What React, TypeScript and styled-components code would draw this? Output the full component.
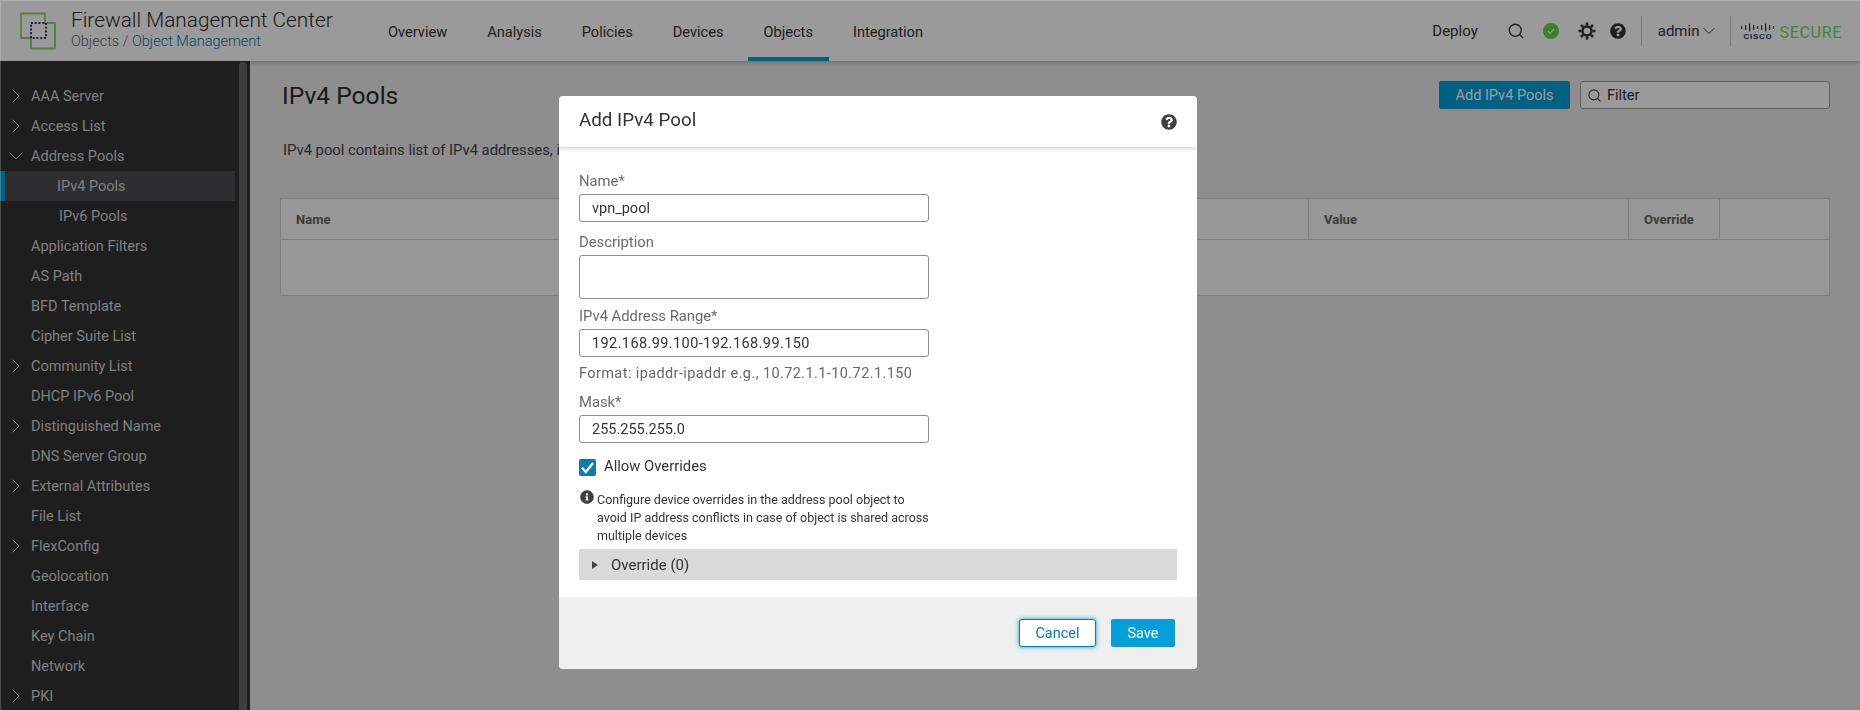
import styled, { createGlobalStyle } from "styled-components";
import { ChevronDown, ChevronRight, Search } from "lucide-react";
import { FaInfoCircle, FaQuestionCircle } from "react-icons/fa";

const GlobalStyle = createGlobalStyle`
  html, body {
    margin: 0;
    height: 100%;
    overflow: hidden;
  }
  body {
    font-family: Roboto, "Liberation Sans", sans-serif;
    color: #333;
    background: #ebebeb;
  }
  * {
    box-sizing: border-box;
  }
`;

const NAV_ITEMS = ["Overview", "Analysis", "Policies", "Devices", "Objects", "Integration"];

const SIDE_ITEMS: { label: string; arrow?: "right" | "down"; child?: boolean; active?: boolean }[] = [
  { label: "AAA Server", arrow: "right" },
  { label: "Access List", arrow: "right" },
  { label: "Address Pools", arrow: "down" },
  { label: "IPv4 Pools", child: true, active: true },
  { label: "IPv6 Pools", child: true },
  { label: "Application Filters" },
  { label: "AS Path" },
  { label: "BFD Template" },
  { label: "Cipher Suite List" },
  { label: "Community List", arrow: "right" },
  { label: "DHCP IPv6 Pool" },
  { label: "Distinguished Name", arrow: "right" },
  { label: "DNS Server Group" },
  { label: "External Attributes", arrow: "right" },
  { label: "File List" },
  { label: "FlexConfig", arrow: "right" },
  { label: "Geolocation" },
  { label: "Interface" },
  { label: "Key Chain" },
  { label: "Network" },
  { label: "PKI", arrow: "right" },
];

function ProductLogo() {
  return (
    <svg width="38" height="38" viewBox="0 0 38 38" fill="none">
      <path
        d="M2 2.500a1 1 0 0 1 1-1h23V11h10v25.500H12V26H2z"
        stroke="#8ed470"
        strokeWidth="1.800"
        strokeLinejoin="round"
      />
      <path d="M12 11h15v15H12z" stroke="#1d3a6a" strokeWidth="2" strokeDasharray="2 1.750" />
    </svg>
  );
}

function Gear() {
  return (
    <svg width="18" height="18" viewBox="0 0 18 18" fill="none" stroke="#333">
      <circle cx="9" cy="9" r="4.500" strokeWidth="2.400" />
      <g strokeWidth="2.600">
        <path d="M9 .500v3M9 14.500v3M.500 9h3M14.500 9h3M3 3l2.100 2.100M12.900 12.900 15 15M15 3l-2.100 2.100M5.100 12.900 3 15" />
      </g>
    </svg>
  );
}

function CiscoBars() {
  const bars = [3, 5, 8, 5, 3, 5, 8, 5, 3];
  return (
    <svg width="33" height="9" viewBox="0 0 33 9">
      {bars.map((h, i) => (
        <rect key={i} x={i * 4} y={(9 - h) / 2} width="1.200" height={h} fill="#1c3358" rx="0.600" />
      ))}
    </svg>
  );
}

export default function App() {
  return (
    <>
      <GlobalStyle />
      <Page>
        <TopBar>
          <Brand>
            <ProductLogo />
            <BrandText>
              <ProductName>Firewall Management Center</ProductName>
              <Crumbs>
                Objects / <CrumbLink>Object Management</CrumbLink>
              </Crumbs>
            </BrandText>
          </Brand>
          <Nav>
            {NAV_ITEMS.map((item) => (
              <NavItem key={item} $active={item === "Objects"}>
                {item}
              </NavItem>
            ))}
          </Nav>
          <Tools>
            <Deploy>Deploy</Deploy>
            <ToolIcons>
              <Search size={18} strokeWidth={1.7} color="#333" />
              <StatusDot>
                <svg width="8" height="8" viewBox="0 0 8 8" fill="none" stroke="#fff" strokeWidth="1.300">
                  <path d="M1 4.200 3.200 6.300 7 1.800" />
                </svg>
              </StatusDot>
              <GearSlot>
                <Gear />
              </GearSlot>
              <FaQuestionCircle size={16} color="#333" />
            </ToolIcons>
            <Divider />
            <AdminMenu>
              admin
              <ChevronDown size={20} strokeWidth={1.2} />
            </AdminMenu>
            <Divider />
            <CiscoMark>
              <CiscoLogo>
                <CiscoBars />
                <CiscoWord>cisco</CiscoWord>
              </CiscoLogo>
              <Secure>SECURE</Secure>
            </CiscoMark>
          </Tools>
        </TopBar>
        <Main>
          <Sidebar>
            <SideList>
              {SIDE_ITEMS.map((item) => (
                <SideRow key={item.label} $active={item.active} $child={item.child}>
                  <SideArrow>
                    {item.arrow === "right" && <ChevronRight size={24} strokeWidth={1} />}
                    {item.arrow === "down" && <ChevronDown size={24} strokeWidth={1} />}
                  </SideArrow>
                  {item.label}
                </SideRow>
              ))}
            </SideList>
            <ScrollThumb />
          </Sidebar>
          <Content>
            <ContentHead>
              <PageTitle>IPv4 Pools</PageTitle>
              <HeadActions>
                <AddButton>Add IPv4 Pools</AddButton>
                <FilterBox>
                  <Search size={15} strokeWidth={1.7} color="#444" />
                  Filter
                </FilterBox>
              </HeadActions>
            </ContentHead>
            <Intro>IPv4 pool contains list of IPv4 addresses, it is used for diagnostic interface with clustering, or for VPN</Intro>
            <Table>
              <TableHead>
                <HeadCell>Name</HeadCell>
                <HeadCell>Value</HeadCell>
                <HeadCell>Override</HeadCell>
                <HeadCell />
              </TableHead>
              <TableBody />
            </Table>
          </Content>
        </Main>
      </Page>
      <Backdrop>
        <Modal>
          <ModalHeader>
            <ModalTitle>Add IPv4 Pool</ModalTitle>
            <FaQuestionCircle size={16} color="#3f3f3f" />
          </ModalHeader>
          <ModalBody>
            <Field $after={10}>
              <FieldLabel>Name*</FieldLabel>
              <TextBox>vpn_pool</TextBox>
            </Field>
            <Field $after={7}>
              <FieldLabel>Description</FieldLabel>
              <TextBox $tall />
            </Field>
            <Field $after={8}>
              <FieldLabel>IPv4 Address Range*</FieldLabel>
              <TextBox $spread>192.168.99.100-192.168.99.150</TextBox>
              <FieldHint>Format: ipaddr-ipaddr e.g., 10.72.1.1-10.72.1.150</FieldHint>
            </Field>
            <Field $after={16}>
              <FieldLabel>Mask*</FieldLabel>
              <TextBox>255.255.255.0</TextBox>
            </Field>
            <CheckRow>
              <CheckBox>
                <svg width="15" height="15" viewBox="0 0 15 15" fill="none" stroke="#fff" strokeWidth="2.300">
                  <path d="M2 7.800 5.800 12 13 3" />
                </svg>
              </CheckBox>
              <CheckText>Allow Overrides</CheckText>
            </CheckRow>
            <InfoNote>
              <InfoIcon>
                <FaInfoCircle size={14} color="#3f3f3f" />
              </InfoIcon>
              <InfoText>
                Configure device overrides in the address pool object to avoid IP address conflicts in case of object is
                shared across multiple devices
              </InfoText>
            </InfoNote>
            <OverrideBar>
              <OverrideCaret />
              Override (0)
            </OverrideBar>
          </ModalBody>
          <ModalFooter>
            <CancelButton>Cancel</CancelButton>
            <SaveButton>Save</SaveButton>
          </ModalFooter>
        </Modal>
      </Backdrop>
    </>
  );
}

const Page = styled.div`
  width: 1860px;
  height: 710px;
  display: flex;
  flex-direction: column;
  overflow: hidden;
`;

const TopBar = styled.header`
  height: 61px;
  flex: none;
  display: flex;
  align-items: center;
  padding: 0 18px 0 19px;
  background: #fff;
  box-shadow: 0 1px 4px rgba(0, 0, 0, 0.3);
  position: relative;
`;

const Brand = styled.div`
  width: 353px;
  display: flex;
  align-items: center;
  gap: 14px;
`;

const BrandText = styled.div`
  display: flex;
  flex-direction: column;
  padding-bottom: 4px;
`;

const ProductName = styled.div`
  font-size: 20.800px;
  line-height: 26px;
  font-weight: 300;
  color: #2b2b2b;
`;

const Crumbs = styled.div`
  font-size: 14.500px;
  line-height: 18px;
  font-weight: 300;
  color: #666;
`;

const CrumbLink = styled.span`
  color: #0a76a8;
`;

const Nav = styled.nav`
  display: flex;
  height: 100%;
  gap: 8px;
`;

const NavItem = styled.div<{ $active?: boolean }>`
  height: 100%;
  display: flex;
  align-items: center;
  padding: 2px 16px 0;
  font-size: 14.600px;
  color: #333;
  border-bottom: 4px solid ${(p) => (p.$active ? "#049fd9" : "transparent")};
  border-top: 4px solid transparent;
`;

const Tools = styled.div`
  margin-left: auto;
  display: flex;
  align-items: center;
`;

const Deploy = styled.div`
  font-size: 15px;
  color: #333;
  margin-right: 29px;
`;

const ToolIcons = styled.div`
  display: flex;
  align-items: center;
  gap: 18px;
  margin-right: 15px;
`;

const StatusDot = styled.span`
  width: 16px;
  height: 16px;
  border-radius: 50%;
  background: #68d048;
  display: flex;
  align-items: center;
  justify-content: center;
`;

const GearSlot = styled.span`
  display: flex;
  margin: 0 -4px 0 1px;
`;

const Divider = styled.span`
  width: 1px;
  height: 30px;
  background: #c9c9c9;
`;

const AdminMenu = styled.div`
  display: flex;
  align-items: center;
  gap: 0;
  font-size: 15px;
  color: #333;
  padding: 0 11px 0 16px;
`;

const CiscoMark = styled.div`
  display: flex;
  align-items: center;
  gap: 5px;
  padding-left: 10px;
`;

const CiscoLogo = styled.div`
  display: flex;
  flex-direction: column;
  align-items: center;
  gap: 1px;
  padding-top: 2px;
`;

const CiscoWord = styled.span`
  font-family: "Liberation Sans", sans-serif;
  font-size: 8px;
  line-height: 8px;
  font-weight: 700;
  letter-spacing: 0.700px;
  text-transform: uppercase;
  color: #1c3358;
`;

const Secure = styled.span`
  font-size: 16px;
  letter-spacing: 0.700px;
  color: #7ad65a;
  padding-top: 4px;
`;

const Main = styled.div`
  flex: 1;
  min-height: 0;
  display: flex;
`;

const Sidebar = styled.aside`
  width: 250px;
  flex: none;
  background: #323232;
  display: flex;
  position: relative;
  overflow: hidden;
`;

const SideList = styled.div`
  flex: 1;
  padding-top: 20px;
`;

const SideRow = styled.div<{ $active?: boolean; $child?: boolean }>`
  width: 235px;
  height: 30px;
  display: flex;
  align-items: center;
  font-size: 14.500px;
  color: #d3d3d3;
  padding-left: ${(p) => (p.$active ? "25px" : p.$child ? "32px" : "4px")};
  background: ${(p) => (p.$active ? "#4c4c50" : "transparent")};
  border-left: ${(p) => (p.$active ? "5px solid #049fd9" : "none")};
`;

const SideArrow = styled.span`
  width: 27px;
  flex: none;
  display: flex;
  color: #d3d3d3;
`;

const ScrollThumb = styled.div`
  position: absolute;
  top: 1px;
  right: 3px;
  bottom: 0;
  width: 8px;
  border-radius: 4px 4px 0 0;
  background: #686868;
`;

const Content = styled.main`
  flex: 1;
  padding: 20px 30px 0 30px;
`;

const ContentHead = styled.div`
  display: flex;
  justify-content: space-between;
  align-items: center;
  height: 28px;
`;

const PageTitle = styled.h1`
  margin: 0 0 0 2px;
  font-size: 24.600px;
  font-weight: 400;
  color: #2b2b2b;
`;

const HeadActions = styled.div`
  display: flex;
  gap: 10px;
`;

const AddButton = styled.div`
  width: 131px;
  height: 28px;
  display: flex;
  align-items: center;
  justify-content: center;
  border-radius: 2px;
  background: #049fd9;
  color: #fff;
  font-size: 14.500px;
`;

const FilterBox = styled.div`
  width: 250px;
  height: 28px;
  display: flex;
  align-items: center;
  gap: 5px;
  padding: 0 6px;
  border: 1px solid #9d9d9d;
  border-radius: 3px;
  background: #fff;
  font-size: 14.500px;
  color: #333;
`;

const Intro = styled.p`
  margin: 31px 0 0 3px;
  font-size: 14.800px;
  line-height: 20px;
  color: #444;
  white-space: nowrap;
`;

const Table = styled.div`
  margin-top: 38px;
  width: 1550px;
  border: 1px solid #d0d0d0;
  background: #fbfbfb;
`;

const TableHead = styled.div`
  height: 41px;
  display: grid;
  grid-template-columns: 1027px 320px 91px 1fr;
  border-bottom: 1px solid #d0d0d0;
`;

const HeadCell = styled.div`
  display: flex;
  align-items: center;
  padding-left: 15px;
  font-size: 13px;
  font-weight: 700;
  color: #666;
  border-left: 1px solid #d0d0d0;
  &:first-child {
    border-left: 0;
  }
`;

const TableBody = styled.div`
  height: 55px;
`;

const Backdrop = styled.div`
  position: fixed;
  inset: 0;
  display: flex;
  align-items: flex-start;
  padding: 95px 0 0 558px;
  background: rgba(0, 0, 0, 0.395);
  border-style: solid;
  border-width: 1px 0 0 1px;
  border-color: rgba(255, 255, 255, 0.2);
`;

const Modal = styled.div`
  width: 638px;
  height: 573px;
  display: flex;
  flex-direction: column;
  border-radius: 4px;
  background: #fff;
  overflow: hidden;
`;

const ModalHeader = styled.div`
  height: 51px;
  flex: none;
  display: flex;
  align-items: center;
  justify-content: space-between;
  padding: 1px 20px 0;
  box-shadow: 0 1px 5px rgba(0, 0, 0, 0.22);
  position: relative;
`;

const ModalTitle = styled.h2`
  margin: -5px 0 0;
  font-size: 18.800px;
  font-weight: 400;
  color: #333;
`;

const ModalBody = styled.div`
  flex: 1;
  padding: 24px 20px 0;
`;

const Field = styled.div<{ $after: number }>`
  margin-bottom: ${(p) => p.$after}px;
`;

const FieldLabel = styled.div`
  height: 20px;
  margin-bottom: 3px;
  font-size: 14.800px;
  line-height: 20px;
  color: #6a6a6a;
`;

const TextBox = styled.div<{ $tall?: boolean; $spread?: boolean }>`
  width: 350px;
  height: ${(p) => (p.$tall ? "44px" : "28px")};
  padding: 0 12px;
  border: 1px solid #8f8f8f;
  border-radius: 3px;
  font-size: 14.500px;
  line-height: 28px;
  letter-spacing: ${(p) => (p.$spread ? "0.400px" : "0")};
  color: #333;
`;

const FieldHint = styled.div`
  margin-top: 6px;
  font-size: 14.500px;
  letter-spacing: 0.400px;
  line-height: 21px;
  color: #666;
`;

const CheckRow = styled.div`
  height: 17px;
  display: flex;
  align-items: center;
  gap: 8px;
  font-size: 14.800px;
  color: #333;
`;

const CheckBox = styled.span`
  width: 17px;
  height: 17px;
  display: flex;
  align-items: center;
  justify-content: center;
  border-radius: 2px;
  background: #0a7cae;
`;

const CheckText = styled.span`
  padding-bottom: 3px;
`;

const InfoNote = styled.div`
  margin-top: 14px;
  display: flex;
  gap: 3px;
  width: 352px;
`;

const InfoIcon = styled.span`
  flex: none;
  display: flex;
  padding: 0 0 0 1px;
  height: 14px;
`;

const InfoText = styled.div`
  font-size: 12.500px;
  line-height: 18px;
  color: #333;
  margin-top: 1px;
`;

const OverrideBar = styled.div`
  margin-top: 4px;
  height: 31px;
  display: flex;
  align-items: center;
  padding-left: 13px;
  gap: 13px;
  background: #d9d9d9;
  font-size: 15px;
  color: #333;
`;

const OverrideCaret = styled.span`
  width: 0;
  height: 0;
  border-top: 4px solid transparent;
  border-bottom: 4px solid transparent;
  border-left: 6px solid #444;
`;

const ModalFooter = styled.div`
  height: 72px;
  flex: none;
  display: flex;
  justify-content: flex-end;
  align-items: center;
  gap: 15px;
  padding: 0 22px;
  background: #efefef;
`;

const CancelButton = styled.div`
  width: 77px;
  height: 28px;
  display: flex;
  align-items: center;
  justify-content: center;
  border: 1px solid #0a7cae;
  border-radius: 3px;
  box-shadow: 0 0 4px #049fd9;
  background: #fff;
  color: #0a7cae;
  font-size: 14.500px;
`;

const SaveButton = styled.div`
  width: 64px;
  height: 28px;
  display: flex;
  align-items: center;
  justify-content: center;
  border-radius: 2px;
  background: #049fd9;
  color: #fff;
  font-size: 14.500px;
`;
